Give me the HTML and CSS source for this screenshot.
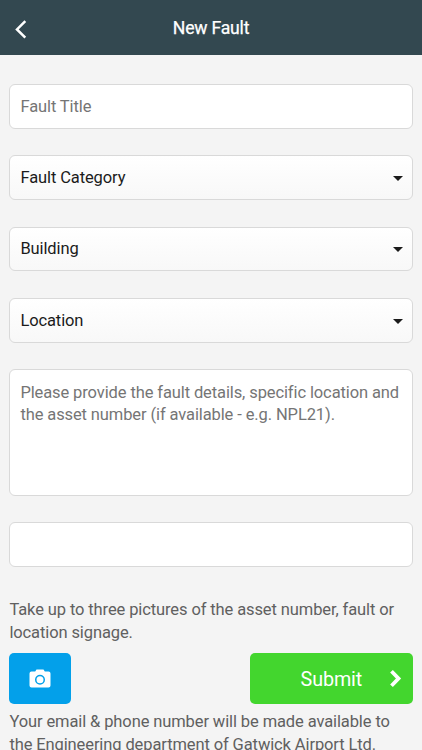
FILE: index.html
```html
<!DOCTYPE html>
<html lang="en">
<head>
<meta charset="utf-8">
<title>New Fault</title>
<link rel="stylesheet" href="styles.css">
</head>
<body>
<header class="bar">
  <svg class="back" viewBox="0 0 12 20"><path d="M10.300 1.200 2 9.400l8.300 8.200"/></svg>
  <h1>New Fault</h1>
</header>
<main class="form">
  <div class="field title muted">Fault Title</div>
  <div class="field select">Fault Category<i class="caret"></i></div>
  <div class="field select">Building<i class="caret"></i></div>
  <div class="field select">Location<i class="caret"></i></div>
  <div class="field area muted">Please provide the fault details, specific location and<br>the asset number (if available - e.g. NPL21).</div>
  <div class="field"></div>
  <p class="hint">Take up to three pictures of the asset number, fault or<br>location signage.</p>
  <div class="actions">
    <button class="camera" aria-label="Camera"><svg viewBox="0 0 22 20"><path fill-rule="evenodd" d="M7.500 .5h7l1.300 2H19.500a2 2 0 0 1 2 2v12a2 2 0 0 1-2 2h-17a2 2 0 0 1-2-2v-12a2 2 0 0 1 2-2h3.700zM11 5.700a5 5 0 1 0 0 10 5 5 0 0 0 0-10zm0 1.500a3.500 3.500 0 1 1 0 7 3.500 3.500 0 0 1 0-7z"/></svg></button>
    <button class="submit"><span>Submit</span><svg viewBox="0 0 14 20"><path d="m2.500 2.200 7 7.300-7 7.300"/></svg></button>
  </div>
  <p class="notice">Your email &amp; phone number will be made available to<br>the Engineering department of Gatwick Airport Ltd.</p>
</main>
</body>
</html>
```
FILE: styles.css
```css
* { box-sizing: border-box; }
body { margin: 0; height: 750px; overflow: hidden; background: #f4f4f4; font: 16.500px/22.500px Roboto, sans-serif; letter-spacing: -0.11px; color: #1b1b1b; }
.bar { position: relative; height: 55px; background: #334850; display: flex; align-items: center; justify-content: center; }
.bar h1 { margin: 0; padding-top: 1px; font-size: 17.600px; font-weight: 400; letter-spacing: -0.200px; color: #fff; -webkit-text-stroke: 0.250px #fff; }
.back { position: absolute; left: 15px; top: 20px; width: 12px; height: 20px; fill: none; stroke: #fff; stroke-width: 2.500; }
.form { padding: 29px 9.400px 0 9.400px; }
.field { height: 44.800px; margin: 0 0 26.500px; padding: 11.500px 10px; border: 1px solid #d9d9d9; border-radius: 6px; background: #fff; white-space: nowrap; }
.title { padding-top: 10.500px; }
.select { display: flex; justify-content: space-between; align-items: center; padding: 1.500px 8.500px 0 10px; background: linear-gradient(#fff, #f8f8f8); }
.caret { border: 5px solid transparent; border-top: 5.500px solid #1b1b1b; border-bottom: 0; }
.area { height: 126.800px; }
.muted { color: #757575; }
.hint, .notice { margin: 0; color: #606060; white-space: nowrap; }
.hint { margin-top: 32px; }
.actions { display: flex; justify-content: space-between; margin: 9px 0 7px; }
button { border: 0; padding: 0; border-radius: 5px; height: 51px; display: flex; align-items: center; justify-content: center; font-family: inherit; }
.camera { width: 61.300px; background: #03a0ea; }
.camera svg { width: 22px; height: 20px; fill: #fff; }
.submit { width: 163px; background: #43d62e; color: #fff; font-size: 19.800px; letter-spacing: -0.150px; justify-content: flex-end; padding-right: 10px; }
.submit span { padding-top: 1px; }
.submit svg { width: 14px; height: 20px; margin-left: 26.500px; fill: none; stroke: #fff; stroke-width: 3.800; }
```
